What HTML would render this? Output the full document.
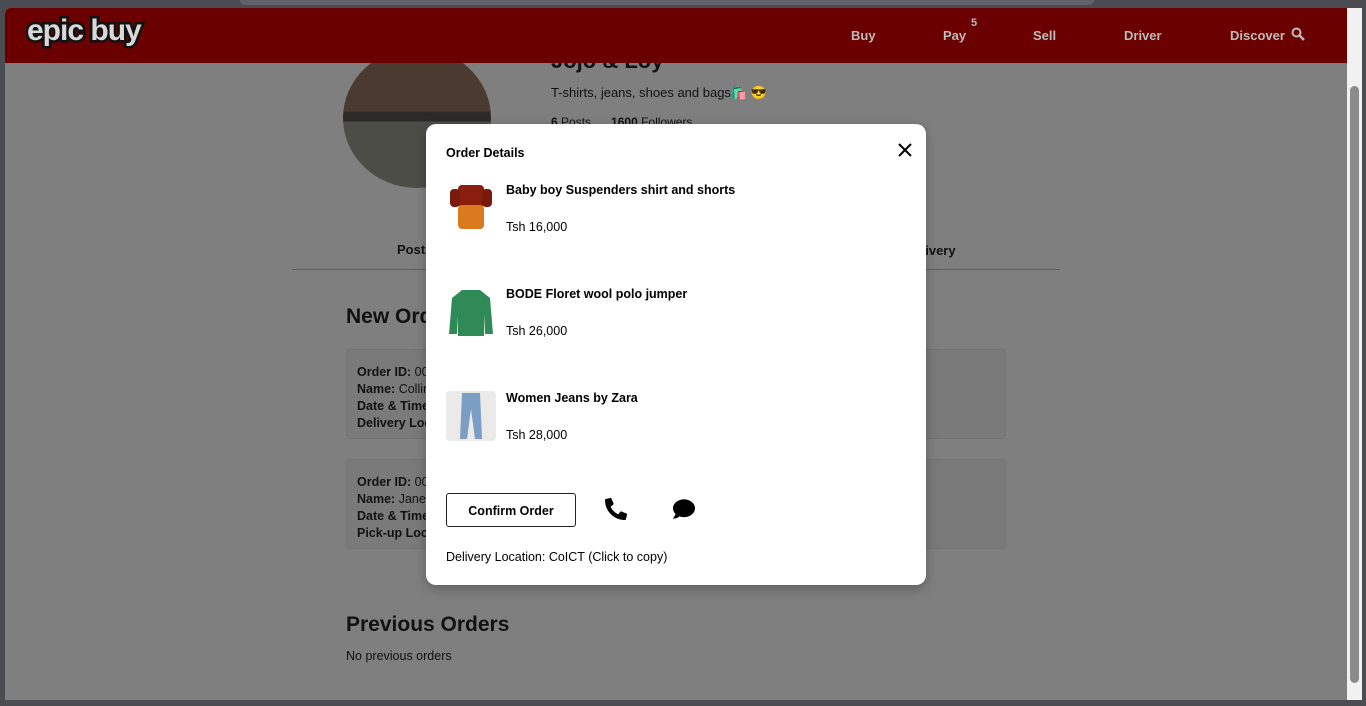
<!DOCTYPE html>
<html><head><meta charset="utf-8"><style>
*{box-sizing:border-box;margin:0;padding:0}
body{width:1366px;height:706px;overflow:hidden;background:#4b4c51;font-family:"Liberation Sans",sans-serif;position:relative}
#win{position:absolute;left:5px;top:8px;width:1342px;height:692px;background:#7f7f7f;overflow:hidden;border-radius:6px 0 0 0}
#topbar{position:absolute;left:240px;top:0;width:854px;height:5px;background:#616267;border-radius:0 0 6px 6px}
#sb{position:absolute;left:1347px;top:8px;width:15px;height:692px;background:#f1f1f1}
#sb .th{position:absolute;left:3px;top:78px;width:9px;height:597px;background:#8b8b8b;border-radius:5px}
header{position:absolute;left:0;top:0;width:1342px;height:55px;background:#6b0000;z-index:3}
.logo{position:absolute;left:22px;top:6px;font:bold 30px "Liberation Sans",sans-serif;color:#d8d8d8;letter-spacing:-1px;-webkit-text-stroke:5px #111;paint-order:stroke fill}
nav a{position:absolute;top:20px;color:#bbb;font-weight:bold;font-size:13px;text-decoration:none}
.abs{position:absolute}
.card{position:absolute;left:341px;width:660px;height:90px;background:#7a7a7a;border:1px solid #747474;border-radius:4px;padding:14px 10px;font-size:12.5px;line-height:17px;color:#111}
#modal{position:absolute;left:426px;top:124px;width:500px;height:461px;background:#fff;border-radius:10px;z-index:5;box-shadow:0 4px 12px rgba(0,0,0,.25)}
.item{position:absolute;left:20px;font-size:12.5px}
.item .t{position:absolute;left:60px;top:0;font-weight:bold;white-space:nowrap}
.item .p{position:absolute;left:60px;top:37px;white-space:nowrap}
</style></head><body>
<div id="topbar"></div>
<div id="win">
<header><div class="logo">epic buy</div>
<nav><a style="left:846px">Buy</a><a style="left:938px">Pay</a><span class="abs" style="left:966px;top:9px;color:#bbb;font-size:11px;font-weight:bold">5</span><a style="left:1028px">Sell</a><a style="left:1119px">Driver</a><a style="left:1225px">Discover</a>
<svg class="abs" style="left:1286px;top:19px" width="14" height="14" viewBox="0 0 14 14"><circle cx="5.5" cy="5.5" r="4" fill="none" stroke="#bbb" stroke-width="2"/><path d="M8.5 8.5 L13 13" stroke="#bbb" stroke-width="2.5"/></svg></nav></header>
<div class="abs" style="left:338px;top:40px;width:148px;height:140px;border-radius:50%;background:linear-gradient(#4a3a30 0 45%,#2c2a28 46% 52%,#4d4d48 53%)"></div>
<div class="abs" style="left:546px;top:40px;font-size:22px;font-weight:bold;color:#111">Jojo &amp; Loy</div>
<div class="abs" style="left:546px;top:77px;font-size:13px;color:#111">T-shirts, jeans, shoes and bags🛍️ 😎</div>
<div class="abs" style="left:546px;top:107px;font-size:12px;color:#111"><b>6</b> Posts &nbsp;&nbsp;&nbsp;&nbsp; <b>1600</b> Followers</div>
<div class="abs" style="left:392px;top:234px;font-size:13px;font-weight:bold;color:#111">Posts</div>
<div class="abs" style="left:900px;top:235px;font-size:13px;font-weight:bold;color:#111">Delivery</div>
<div class="abs" style="left:287px;top:261px;width:768px;height:1px;background:#5f5f5f"></div>
<div class="abs" style="left:341px;top:297px;font-size:21px;font-weight:bold;color:#111">New Orders</div>
<div class="card" style="top:341px"><b>Order ID:</b> 001<br><b>Name:</b> Collins<br><b>Date &amp; Time</b><br><b>Delivery Loc</b></div>
<div class="card" style="top:451px"><b>Order ID:</b> 002<br><b>Name:</b> Jane<br><b>Date &amp; Time</b><br><b>Pick-up Loc</b></div>
<div class="abs" style="left:341px;top:605px;font-size:21px;font-weight:bold;color:#111">Previous Orders</div>
<div class="abs" style="left:341px;top:641px;font-size:12.5px;color:#111">No previous orders</div>
</div>
<div id="sb"><div class="th"></div></div>
<div id="modal">
<div class="abs" style="left:20px;top:22px;font-size:12.5px;font-weight:bold">Order Details</div>
<svg class="abs" style="left:472px;top:19px" width="14" height="14" viewBox="0 0 14 14"><path d="M1 1L13 13M13 1L1 13" stroke="#000" stroke-width="2"/></svg>
<div class="item" style="top:59px"><svg class="abs" style="left:0;top:0" width="50" height="50" viewBox="0 0 50 50"><rect x="12" y="2" width="26" height="22" rx="4" fill="#8a1e0e"/><rect x="4" y="6" width="10" height="18" rx="4" fill="#7a1a0a"/><rect x="36" y="6" width="10" height="18" rx="4" fill="#7a1a0a"/><rect x="12" y="22" width="26" height="24" rx="4" fill="#d97a1e"/></svg><div class="t">Baby boy Suspenders shirt and shorts</div><div class="p">Tsh 16,000</div></div>
<div class="item" style="top:163px"><svg class="abs" style="left:0;top:0" width="50" height="52" viewBox="0 0 50 52"><path d="M16 3h18l10 8 3 36h-8l-1-20v22H12V29l-1 18H3l3-36z" fill="#2f8a55"/></svg><div class="t">BODE Floret wool polo jumper</div><div class="p">Tsh 26,000</div></div>
<div class="item" style="top:267px"><div class="abs" style="left:0;top:0;width:50px;height:50px;background:#eceae8;border-radius:4px"></div><svg class="abs" style="left:0;top:0" width="50" height="50" viewBox="0 0 50 50"><path d="M16 2h18l2 46h-7l-4-30-4 30h-7z" fill="#7b9ec4"/></svg><div class="t">Women Jeans by Zara</div><div class="p">Tsh 28,000</div></div>
<div class="abs" style="left:20px;top:369px;width:130px;height:34px;border:1px solid #222;border-radius:3px;font-size:12.5px;font-weight:bold;text-align:center;line-height:34px">Confirm Order</div>
<svg class="abs" style="left:179px;top:374px" width="22" height="22" viewBox="0 0 512 512"><path d="M497 361l-112-48a24 24 0 0 0-28 7l-50 61A371 371 0 0 1 130 204l61-50a24 24 0 0 0 7-28L150 14a24 24 0 0 0-28-14L18 24A24 24 0 0 0 0 48c0 257 208 464 464 464a24 24 0 0 0 24-19l24-104a24 24 0 0 0-15-28z"/></svg>
<svg class="abs" style="left:247px;top:374px" width="22" height="22" viewBox="0 0 512 512"><path d="M256 32C115 32 0 125 0 240c0 50 22 95 58 131-13 50-54 94-55 95a8 8 0 0 0 6 14c67 0 118-32 143-52 32 12 67 18 104 18 141 0 256-93 256-208S397 32 256 32z"/></svg>
<div class="abs" style="left:20px;top:426px;font-size:12.5px">Delivery Location: CoICT (Click to copy)</div>
</div>
</body></html>
